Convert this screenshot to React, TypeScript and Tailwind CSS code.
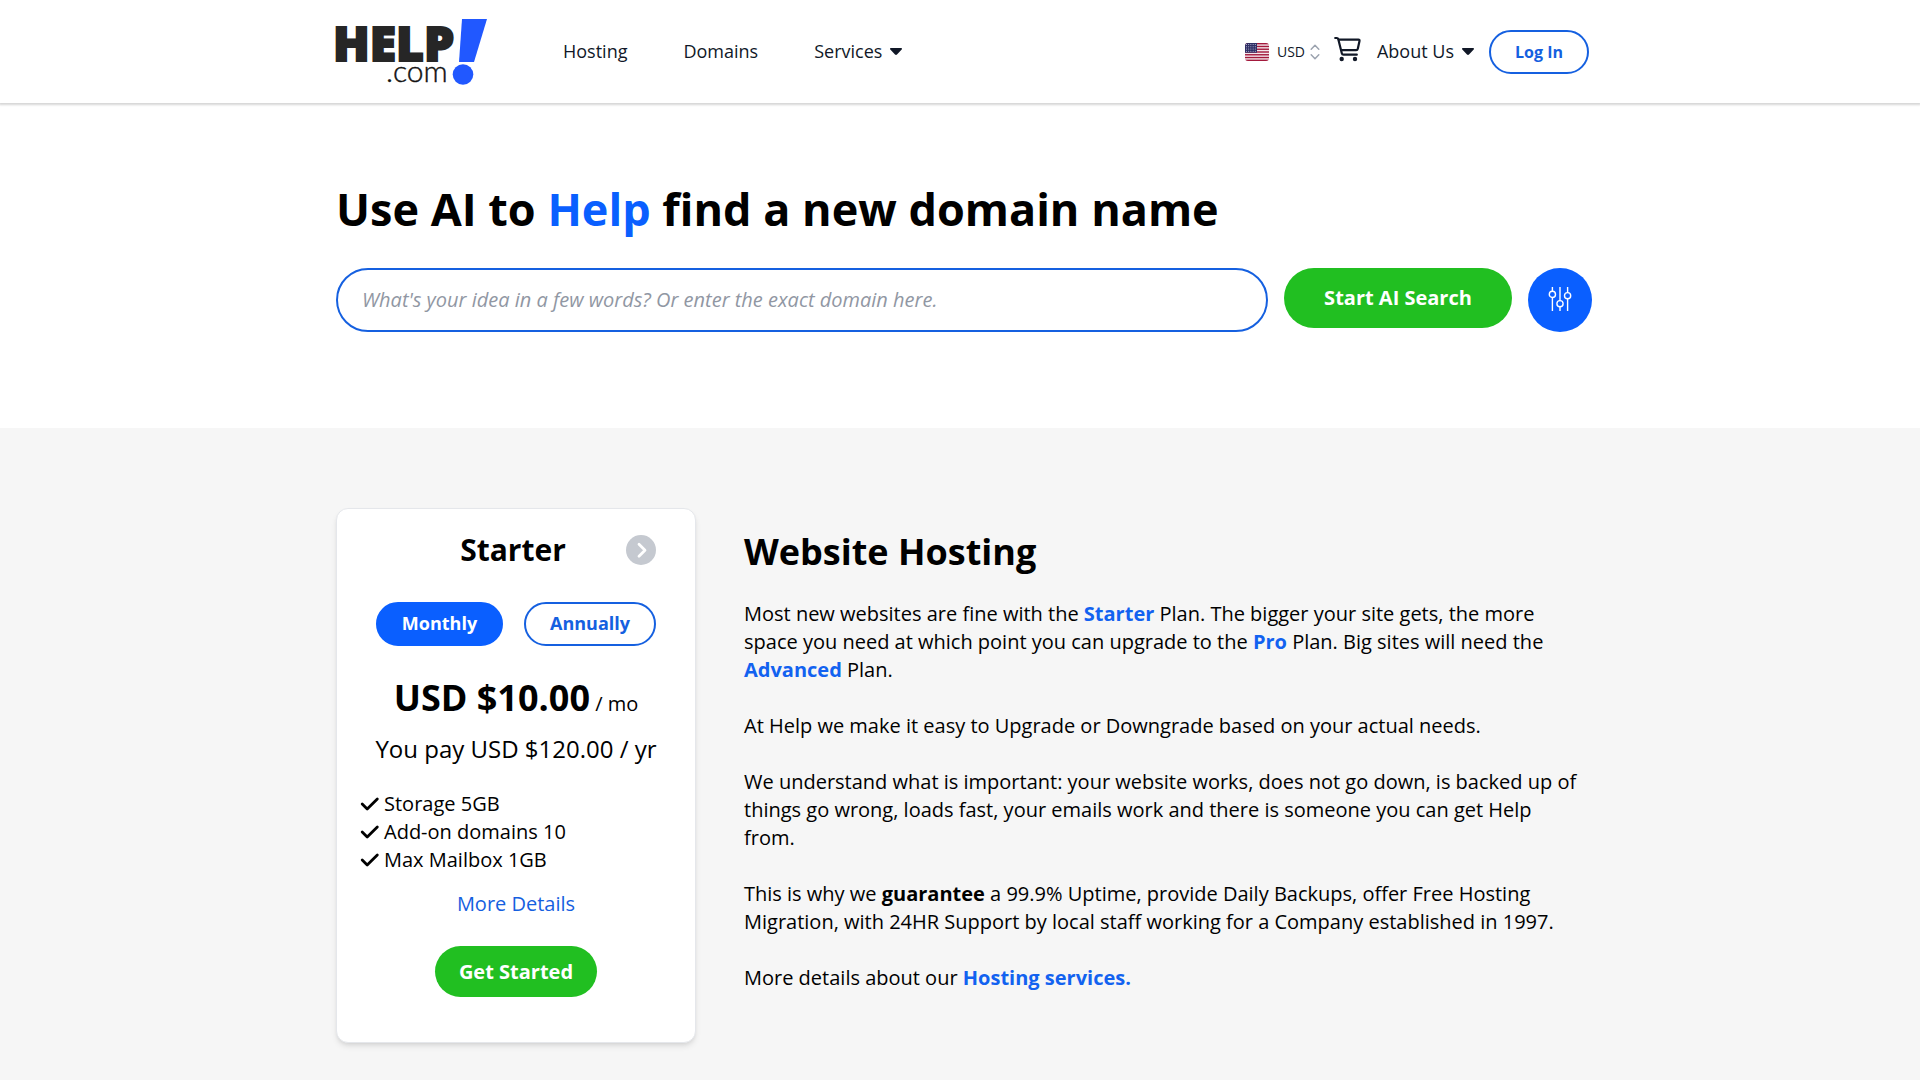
import { useState } from "react";

type Billing = "monthly" | "annually";

const features = ["Storage 5GB", "Add-on domains 10", "Max Mailbox 1GB"];

function Logo() {
  return (
    <svg width="152" height="68" viewBox="0 0 152 68" role="img" aria-label="Help.com" className="overflow-visible">
      <text x="-3" y="43" fontFamily="Open Sans, sans-serif" fontWeight="800" fontSize="48" fill="#262626" stroke="#262626" strokeWidth="2">
        HELP
      </text>
      <text x="50" y="64" fontFamily="Lato, sans-serif" fontWeight="300" fontSize="30" fill="#111" stroke="#111" strokeWidth="0.400">
        .com
      </text>
      <path d="M126 1h25l-13 43h-15z" fill="#2158ff" />
      <circle cx="127" cy="56.500" r="10.300" fill="#2158ff" />
    </svg>
  );
}

function Caret() {
  return (
    <svg width="12" height="7" viewBox="0 0 12 7" fill="#111827" aria-hidden="true" className="mt-px">
      <path d="M1 0h10c.9 0 1.300 1 .7 1.600L7 6.500c-.5.500-1.500.500-2 0L.3 1.600C-.3 1 .1 0 1 0z" />
    </svg>
  );
}

function Flag() {
  const stripes = [0, 1, 2, 3, 4, 5, 6];
  return (
    <svg width="24" height="18" viewBox="0 0 24 18" aria-hidden="true" className="rounded-[3px]">
      <rect width="24" height="18" fill="#f3e6ea" />
      {stripes.map((i) => (
        <rect key={i} y={i * 2.77} width="24" height="1.39" fill="#a3193c" />
      ))}
      <rect width="12" height="9.700" fill="#2f2f66" />
      {[1.6, 3.8, 6, 8.2].map((y) =>
        [1.5, 3.7, 5.9, 8.1, 10.3].map((x) => (
          <circle key={`${x}-${y}`} cx={x} cy={y} r="0.5" fill="#d6d6e6" />
        ))
      )}
    </svg>
  );
}

function CartIcon() {
  return (
    <svg width="27" height="26" viewBox="0 0 27 26" fill="none" stroke="#111827" strokeWidth="2.200" strokeLinecap="round" strokeLinejoin="round" aria-hidden="true">
      <path d="M1.200 2h1.600c.8 0 1.300.4 1.500 1.200l3.500 14c.2 1 .8 1.500 1.800 1.500h13.200" />
      <path d="M4.800 3.600h19.700c.8 0 1.200.5 1 1.300l-1.700 7.800c-.2.900-.8 1.400-1.700 1.400H7.500" />
      <circle cx="7.700" cy="23" r="1.100" />
      <circle cx="21" cy="23" r="1.100" />
    </svg>
  );
}

function Header() {
  return (
    <header className="bg-white shadow-[0_1px_2px_1px_rgba(0,0,0,0.16)]">
      <div className="mx-auto flex h-[103px] max-w-7xl items-center pl-4 pr-[11px] text-lg text-gray-900">
        <a href="#" className="shrink-0">
          <Logo />
        </a>
        <nav className="ml-[75px] flex items-center gap-14 pb-0.5">
          <a href="#">Hosting</a>
          <a href="#">Domains</a>
          <button type="button" className="flex items-center gap-2">
            Services <Caret />
          </button>
        </nav>
        <div className="ml-auto flex items-center">
          <Flag />
          <label className="ml-2 flex items-center">
            <span className="sr-only">Currency</span>
            <select className="w-10 appearance-none bg-transparent text-sm" defaultValue="USD">
              <option>USD</option>
              <option>EUR</option>
              <option>AUD</option>
            </select>
            <svg width="10" height="16" viewBox="0 0 10 16" fill="none" stroke="#9ca3af" strokeWidth="1.500" strokeLinecap="round" strokeLinejoin="round" aria-hidden="true" className="-ml-[7px]">
              <path d="M1.200 5.200L5 1.300l3.800 3.900M1.200 10.800L5 14.700l3.800-3.900" />
            </svg>
          </label>
          <a href="#" aria-label="Cart" className="ml-[14px] mb-1.5">
            <CartIcon />
          </a>
          <button type="button" className="ml-4 flex items-center gap-2 pb-0.5">
            About Us <Caret />
          </button>
          <button type="button" className="ml-[15px] h-11 w-[100px] rounded-full border-2 border-[#1560e0] text-base font-bold text-[#1560e0]">
            Log In
          </button>
        </div>
      </div>
    </header>
  );
}

function DomainSearch() {
  return (
    <section className="mx-auto max-w-7xl pb-24 pl-4 pr-2 pt-[76px]">
      <h1 className="text-[45px] font-bold leading-[60px]">
        Use AI to <span className="text-[#0a5fff]">Help</span> find a new domain name
      </h1>
      <form className="mt-[29px] flex items-start gap-4" onSubmit={(e) => e.preventDefault()}>
        <input
          type="text"
          aria-label="Domain idea"
          placeholder="What's your idea in a few words? Or enter the exact domain here."
          className="h-16 min-w-0 flex-1 rounded-full border-2 border-[#1560e0] px-6 pb-0.5 text-xl placeholder:italic placeholder:text-[#9197a3]"
        />
        <button type="submit" className="h-[60px] w-[228px] rounded-full bg-[#21bf21] text-xl font-bold text-white">
          Start AI Search
        </button>
        <button type="button" aria-label="Search filters" className="flex size-16 items-center justify-center rounded-full bg-[#0a5fff]">
          <svg width="24" height="26" viewBox="0 0 24 26" fill="none" stroke="white" strokeWidth="1.400" aria-hidden="true">
            <path d="M4.400 0v4.300M4.400 10.600V24M12 0v13.500M12 19.800V24M19.600 0v5.600M19.600 11.900V24" />
            <circle cx="4.400" cy="7.400" r="3.100" />
            <circle cx="12" cy="16.700" r="3.100" />
            <circle cx="19.600" cy="8.700" r="3.100" />
          </svg>
        </button>
      </form>
    </section>
  );
}

function PlanCard() {
  const [billing, setBilling] = useState<Billing>("monthly");

  const active = "border-[#0a5fff] bg-[#0a5fff] text-white";
  const idle = "border-[#1560e0] bg-white text-[#1560e0]";

  return (
    <div className="w-[360px] shrink-0 rounded-xl border border-gray-200 bg-white px-[23px] pb-[45px] pt-5 shadow-md">
      <div className="mx-4 grid grid-cols-[24px_1fr_30px] items-center">
        <h2 className="col-start-2 text-center text-3xl font-bold leading-[42px]">Starter</h2>
        <button type="button" aria-label="Next plan" className="flex size-[30px] items-center justify-center rounded-full bg-[#c5c9d0]">
          <svg width="30" height="30" viewBox="0 0 30 30" fill="none" stroke="white" strokeWidth="2.800" strokeLinecap="round" strokeLinejoin="round" aria-hidden="true">
            <path d="M13 9.200l6 6-6 6" />
          </svg>
        </button>
      </div>

      {/* Billing period */}
      <div className="mx-4 mt-[31px] flex justify-between">
        <button
          type="button"
          onClick={() => setBilling("monthly")}
          className={`h-11 w-[127px] rounded-full border-2 pb-0.5 text-lg font-bold ${billing === "monthly" ? active : idle}`}
        >
          Monthly
        </button>
        <button
          type="button"
          onClick={() => setBilling("annually")}
          className={`h-11 w-[132px] rounded-full border-2 pb-0.5 text-lg font-bold ${billing === "annually" ? active : idle}`}
        >
          Annually
        </button>
      </div>

      <p className="mt-7 text-center text-xl leading-[48px]">
        <span className="text-4xl font-bold leading-[48px]">USD $10.00</span> / mo
      </p>
      <p className="mt-[5px] whitespace-nowrap text-center text-2xl">You pay USD $120.00 / yr</p>

      <ul className="mt-[25px] text-xl">
        {features.map((feature) => (
          <li key={feature} className="flex items-center gap-1">
            <svg width="20" height="16" viewBox="0 0 20 16" fill="none" stroke="black" strokeWidth="2.800" strokeLinecap="round" strokeLinejoin="round" aria-hidden="true">
              <path d="M2.200 8l5 5L17.300 3" />
            </svg>
            {feature}
          </li>
        ))}
      </ul>

      <div className="mt-4 flex flex-col items-center">
        <a href="#" className="text-xl text-[#1560e0]">
          More Details
        </a>
        <button type="button" className="mt-7 h-[51px] w-[162px] rounded-full bg-[#21bf21] text-xl font-bold text-white">
          Get Started
        </button>
      </div>
    </div>
  );
}

function HostingInfo() {
  return (
    <div className="min-w-0 flex-1 space-y-7 pt-6 text-xl">
      <h2 className="text-4xl font-bold leading-10">Website Hosting</h2>
      <p>
        Most new websites are fine with the <a href="#" className="font-bold text-[#1262f0]">Starter</a> Plan. The bigger your site gets, the more space you need at which point you can upgrade to the{" "}
        <a href="#" className="font-bold text-[#1262f0]">Pro</a> Plan. Big sites will need the <a href="#" className="font-bold text-[#1262f0]">Advanced</a> Plan.
      </p>
      <p>At Help we make it easy to Upgrade or Downgrade based on your actual needs.</p>
      <p>
        We understand what is important: your website works, does not go down, is backed up of things go wrong, loads fast, your emails work and there is someone you can get Help from.
      </p>
      <p>
        This is why we <strong>guarantee</strong> a 99.9% Uptime, provide Daily Backups, offer Free Hosting Migration, with 24HR Support by local staff working for a Company established in 1997.
      </p>
      <p>
        More details about our <a href="#" className="font-bold text-[#1262f0]">Hosting services.</a>
      </p>
    </div>
  );
}

export default function App() {
  return (
    <div className="min-h-screen bg-white font-['Open_Sans',sans-serif] text-black">
      <Header />
      <main>
        <DomainSearch />
        <section className="bg-[#f6f6f6] py-20">
          <div className="mx-auto flex max-w-7xl items-start gap-12 px-4">
            <PlanCard />
            <HostingInfo />
          </div>
        </section>
      </main>
    </div>
  );
}
